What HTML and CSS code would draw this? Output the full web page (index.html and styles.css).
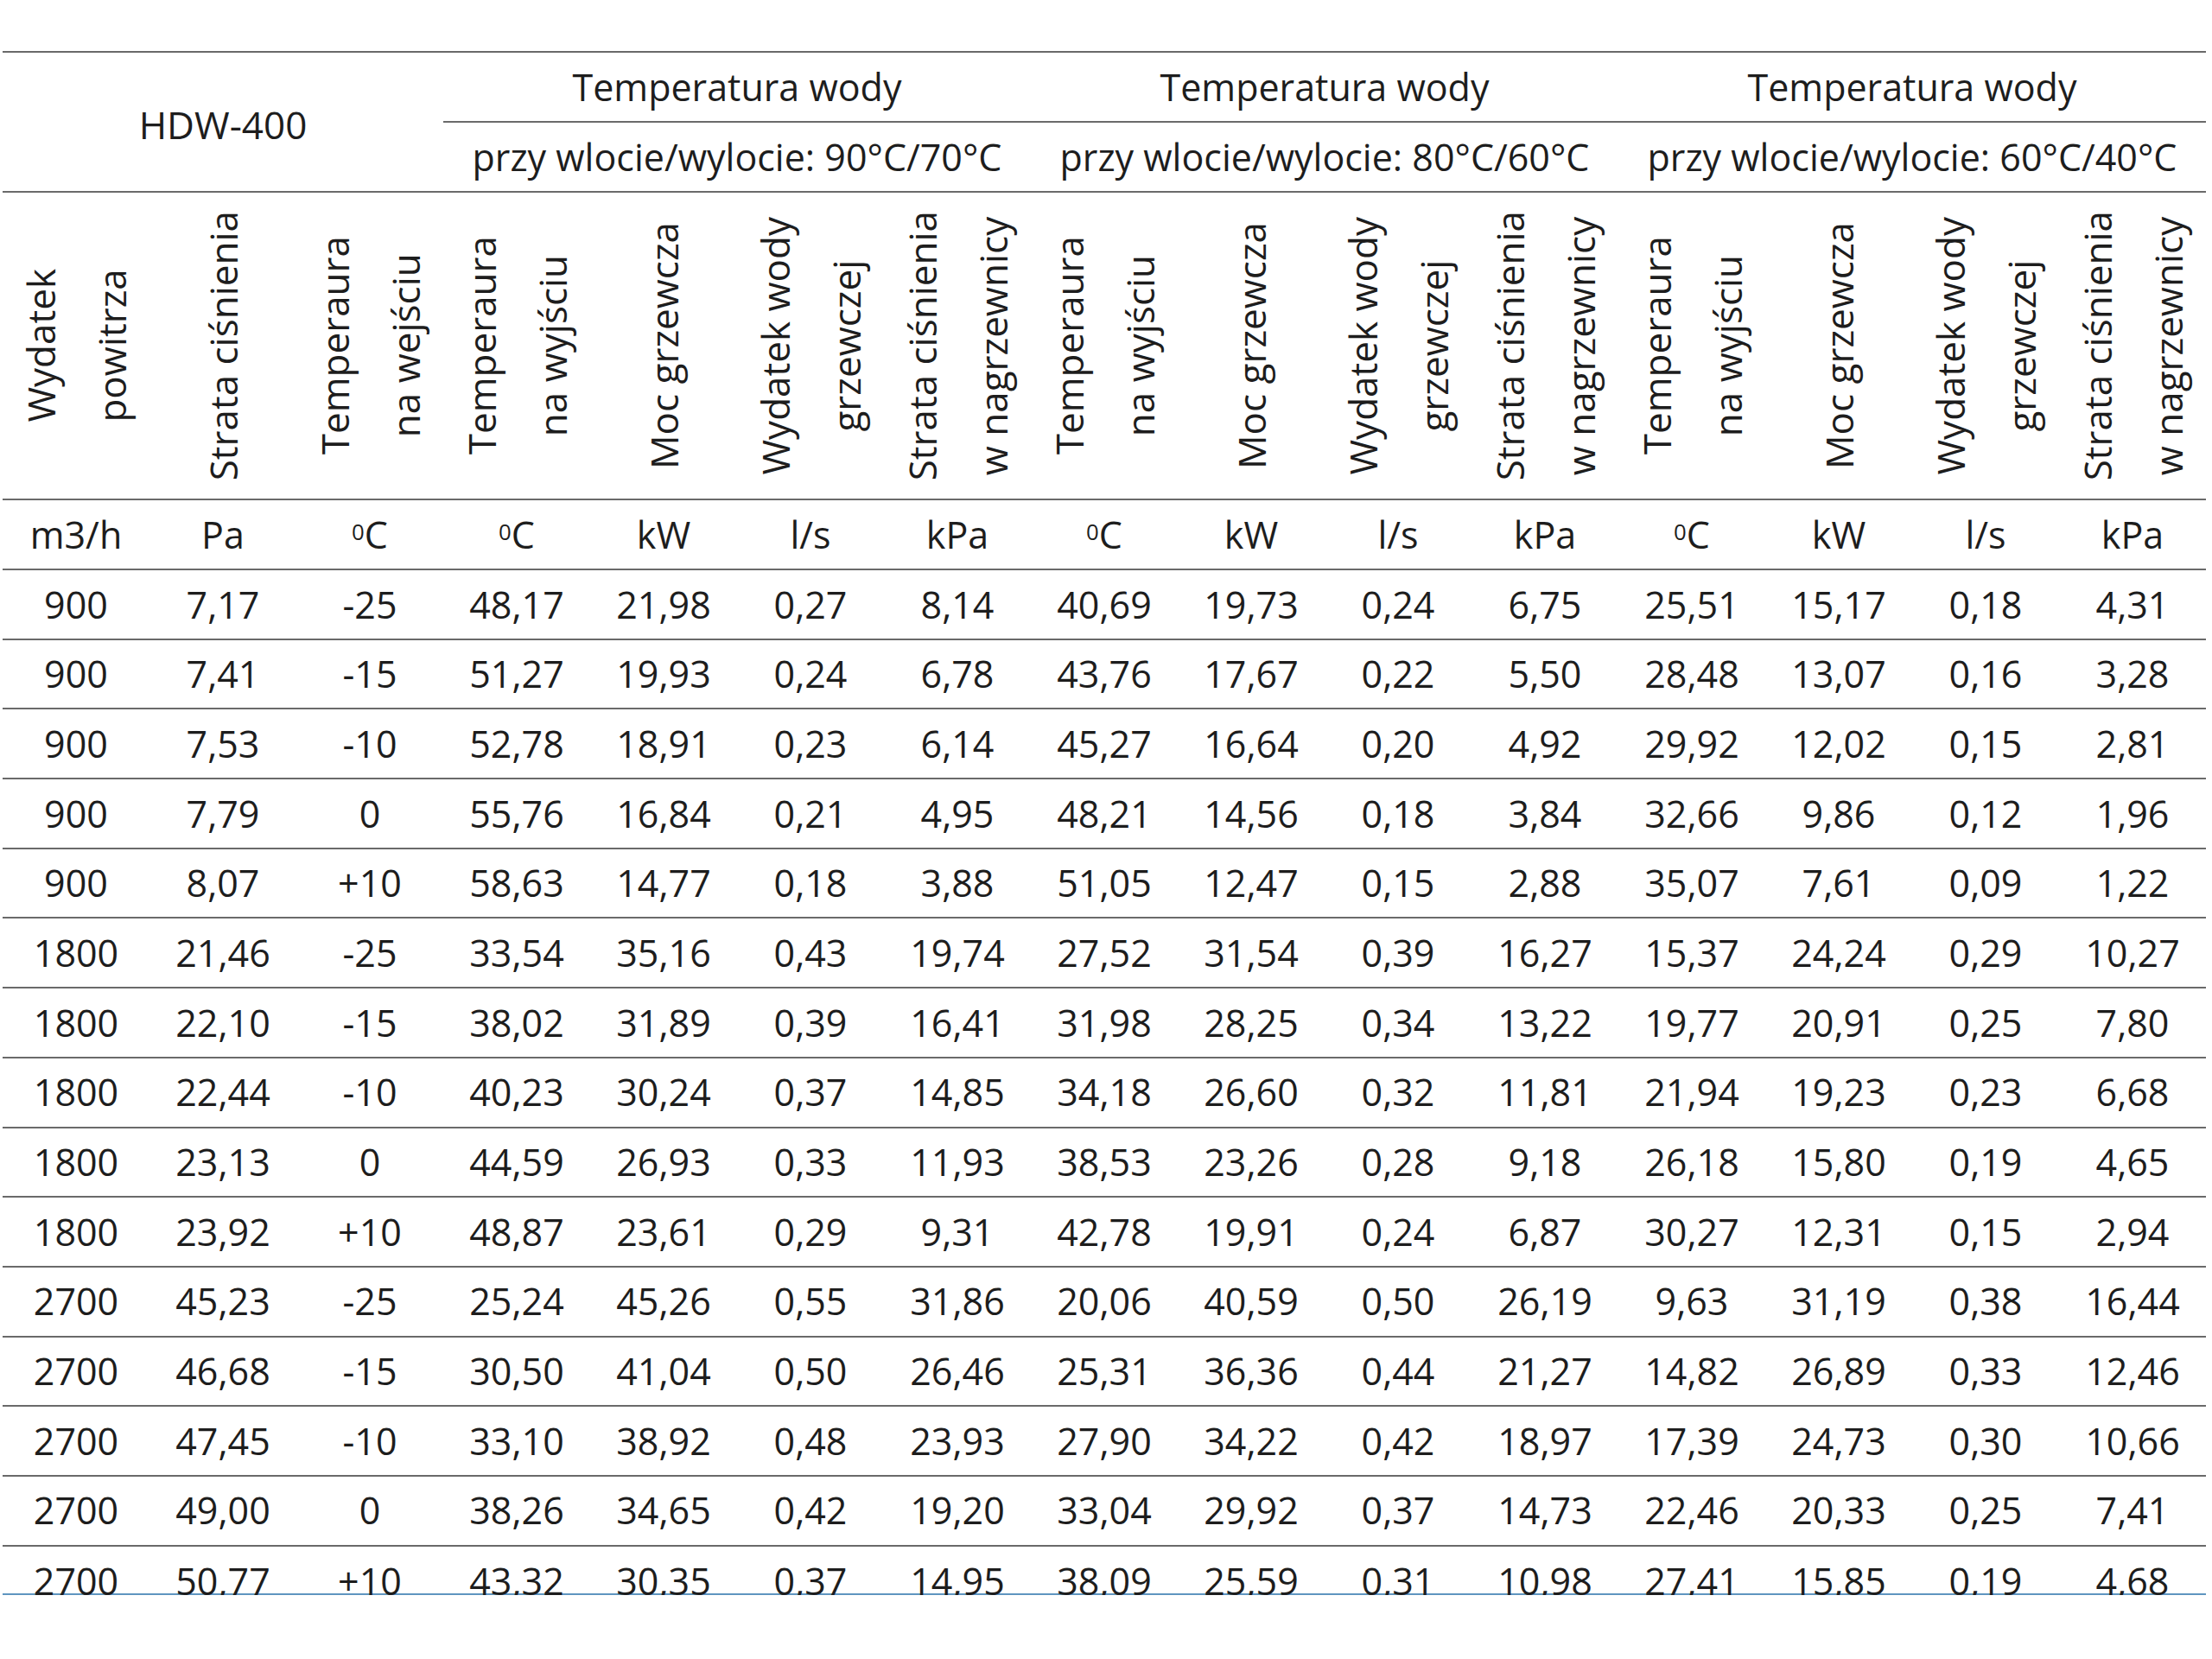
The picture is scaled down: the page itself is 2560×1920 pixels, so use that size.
FILE: index.html
```html
<!DOCTYPE html>
<html lang="pl">
<head>
<meta charset="utf-8">
<title>HDW-400</title>
<link rel="stylesheet" href="styles.css">
</head>
<body>
<div class="sheet">
  <div class="grid">
    <div class="cell model">HDW-400</div>
    <div class="cell grp-a">Temperatura wody</div>
    <div class="cell grp-a">Temperatura wody</div>
    <div class="cell grp-a">Temperatura wody</div>
    <div class="cell grp-b">przy wlocie/wylocie: 90°C/70°C</div>
    <div class="cell grp-b">przy wlocie/wylocie: 80°C/60°C</div>
    <div class="cell grp-b">przy wlocie/wylocie: 60°C/40°C</div>

    <div class="cell vh"><span class="vt">Wydatek<br>powitrza</span></div>
    <div class="cell vh"><span class="vt">Strata ciśnienia</span></div>
    <div class="cell vh"><span class="vt">Temperaura<br>na wejściu</span></div>
    <div class="cell vh"><span class="vt">Temperaura<br>na wyjściu</span></div>
    <div class="cell vh"><span class="vt">Moc grzewcza</span></div>
    <div class="cell vh"><span class="vt">Wydatek wody<br>grzewczej</span></div>
    <div class="cell vh"><span class="vt">Strata ciśnienia<br>w nagrzewnicy</span></div>
    <div class="cell vh"><span class="vt">Temperaura<br>na wyjściu</span></div>
    <div class="cell vh"><span class="vt">Moc grzewcza</span></div>
    <div class="cell vh"><span class="vt">Wydatek wody<br>grzewczej</span></div>
    <div class="cell vh"><span class="vt">Strata ciśnienia<br>w nagrzewnicy</span></div>
    <div class="cell vh"><span class="vt">Temperaura<br>na wyjściu</span></div>
    <div class="cell vh"><span class="vt">Moc grzewcza</span></div>
    <div class="cell vh"><span class="vt">Wydatek wody<br>grzewczej</span></div>
    <div class="cell vh"><span class="vt">Strata ciśnienia<br>w nagrzewnicy</span></div>

    <div class="cell">m3/h</div><div class="cell">Pa</div><div class="cell"><sup class="deg">0</sup>C</div>
    <div class="cell"><sup class="deg">0</sup>C</div><div class="cell">kW</div><div class="cell">l/s</div><div class="cell">kPa</div>
    <div class="cell"><sup class="deg">0</sup>C</div><div class="cell">kW</div><div class="cell">l/s</div><div class="cell">kPa</div>
    <div class="cell"><sup class="deg">0</sup>C</div><div class="cell">kW</div><div class="cell">l/s</div><div class="cell">kPa</div>

    <div class="cell">900</div><div class="cell">7,17</div><div class="cell">-25</div><div class="cell">48,17</div><div class="cell">21,98</div><div class="cell">0,27</div><div class="cell">8,14</div><div class="cell">40,69</div><div class="cell">19,73</div><div class="cell">0,24</div><div class="cell">6,75</div><div class="cell">25,51</div><div class="cell">15,17</div><div class="cell">0,18</div><div class="cell">4,31</div>
    <div class="cell">900</div><div class="cell">7,41</div><div class="cell">-15</div><div class="cell">51,27</div><div class="cell">19,93</div><div class="cell">0,24</div><div class="cell">6,78</div><div class="cell">43,76</div><div class="cell">17,67</div><div class="cell">0,22</div><div class="cell">5,50</div><div class="cell">28,48</div><div class="cell">13,07</div><div class="cell">0,16</div><div class="cell">3,28</div>
    <div class="cell">900</div><div class="cell">7,53</div><div class="cell">-10</div><div class="cell">52,78</div><div class="cell">18,91</div><div class="cell">0,23</div><div class="cell">6,14</div><div class="cell">45,27</div><div class="cell">16,64</div><div class="cell">0,20</div><div class="cell">4,92</div><div class="cell">29,92</div><div class="cell">12,02</div><div class="cell">0,15</div><div class="cell">2,81</div>
    <div class="cell">900</div><div class="cell">7,79</div><div class="cell">0</div><div class="cell">55,76</div><div class="cell">16,84</div><div class="cell">0,21</div><div class="cell">4,95</div><div class="cell">48,21</div><div class="cell">14,56</div><div class="cell">0,18</div><div class="cell">3,84</div><div class="cell">32,66</div><div class="cell">9,86</div><div class="cell">0,12</div><div class="cell">1,96</div>
    <div class="cell">900</div><div class="cell">8,07</div><div class="cell">+10</div><div class="cell">58,63</div><div class="cell">14,77</div><div class="cell">0,18</div><div class="cell">3,88</div><div class="cell">51,05</div><div class="cell">12,47</div><div class="cell">0,15</div><div class="cell">2,88</div><div class="cell">35,07</div><div class="cell">7,61</div><div class="cell">0,09</div><div class="cell">1,22</div>
    <div class="cell">1800</div><div class="cell">21,46</div><div class="cell">-25</div><div class="cell">33,54</div><div class="cell">35,16</div><div class="cell">0,43</div><div class="cell">19,74</div><div class="cell">27,52</div><div class="cell">31,54</div><div class="cell">0,39</div><div class="cell">16,27</div><div class="cell">15,37</div><div class="cell">24,24</div><div class="cell">0,29</div><div class="cell">10,27</div>
    <div class="cell">1800</div><div class="cell">22,10</div><div class="cell">-15</div><div class="cell">38,02</div><div class="cell">31,89</div><div class="cell">0,39</div><div class="cell">16,41</div><div class="cell">31,98</div><div class="cell">28,25</div><div class="cell">0,34</div><div class="cell">13,22</div><div class="cell">19,77</div><div class="cell">20,91</div><div class="cell">0,25</div><div class="cell">7,80</div>
    <div class="cell">1800</div><div class="cell">22,44</div><div class="cell">-10</div><div class="cell">40,23</div><div class="cell">30,24</div><div class="cell">0,37</div><div class="cell">14,85</div><div class="cell">34,18</div><div class="cell">26,60</div><div class="cell">0,32</div><div class="cell">11,81</div><div class="cell">21,94</div><div class="cell">19,23</div><div class="cell">0,23</div><div class="cell">6,68</div>
    <div class="cell">1800</div><div class="cell">23,13</div><div class="cell">0</div><div class="cell">44,59</div><div class="cell">26,93</div><div class="cell">0,33</div><div class="cell">11,93</div><div class="cell">38,53</div><div class="cell">23,26</div><div class="cell">0,28</div><div class="cell">9,18</div><div class="cell">26,18</div><div class="cell">15,80</div><div class="cell">0,19</div><div class="cell">4,65</div>
    <div class="cell">1800</div><div class="cell">23,92</div><div class="cell">+10</div><div class="cell">48,87</div><div class="cell">23,61</div><div class="cell">0,29</div><div class="cell">9,31</div><div class="cell">42,78</div><div class="cell">19,91</div><div class="cell">0,24</div><div class="cell">6,87</div><div class="cell">30,27</div><div class="cell">12,31</div><div class="cell">0,15</div><div class="cell">2,94</div>
    <div class="cell">2700</div><div class="cell">45,23</div><div class="cell">-25</div><div class="cell">25,24</div><div class="cell">45,26</div><div class="cell">0,55</div><div class="cell">31,86</div><div class="cell">20,06</div><div class="cell">40,59</div><div class="cell">0,50</div><div class="cell">26,19</div><div class="cell">9,63</div><div class="cell">31,19</div><div class="cell">0,38</div><div class="cell">16,44</div>
    <div class="cell">2700</div><div class="cell">46,68</div><div class="cell">-15</div><div class="cell">30,50</div><div class="cell">41,04</div><div class="cell">0,50</div><div class="cell">26,46</div><div class="cell">25,31</div><div class="cell">36,36</div><div class="cell">0,44</div><div class="cell">21,27</div><div class="cell">14,82</div><div class="cell">26,89</div><div class="cell">0,33</div><div class="cell">12,46</div>
    <div class="cell">2700</div><div class="cell">47,45</div><div class="cell">-10</div><div class="cell">33,10</div><div class="cell">38,92</div><div class="cell">0,48</div><div class="cell">23,93</div><div class="cell">27,90</div><div class="cell">34,22</div><div class="cell">0,42</div><div class="cell">18,97</div><div class="cell">17,39</div><div class="cell">24,73</div><div class="cell">0,30</div><div class="cell">10,66</div>
    <div class="cell">2700</div><div class="cell">49,00</div><div class="cell">0</div><div class="cell">38,26</div><div class="cell">34,65</div><div class="cell">0,42</div><div class="cell">19,20</div><div class="cell">33,04</div><div class="cell">29,92</div><div class="cell">0,37</div><div class="cell">14,73</div><div class="cell">22,46</div><div class="cell">20,33</div><div class="cell">0,25</div><div class="cell">7,41</div>
    <div class="cell">2700</div><div class="cell">50,77</div><div class="cell">+10</div><div class="cell">43,32</div><div class="cell">30,35</div><div class="cell">0,37</div><div class="cell">14,95</div><div class="cell">38,09</div><div class="cell">25,59</div><div class="cell">0,31</div><div class="cell">10,98</div><div class="cell">27,41</div><div class="cell">15,85</div><div class="cell">0,19</div><div class="cell">4,68</div>
  </div>
</div>
</body>
</html>
```

FILE: styles.css
```css
html, body {
  margin: 0;
  padding: 0;
  background: #ffffff;
}

body {
  font-family: "Open Sans", "DejaVu Sans", sans-serif;
  color: #1d1d1d;
}

.sheet {
  box-sizing: content-box;
  margin: 59px 0 0 3px;
  width: 2550px;
  height: 1785px;
  border-bottom: 2px solid #5f95c0;
}

.grid {
  display: grid;
  grid-template-columns: repeat(15, 170px);
  grid-template-rows: 81px 81px 356px 81px repeat(14, 80.7px) 58px;
}

.cell {
  box-sizing: border-box;
  border-top: 2px solid #6a6a6a;
  display: flex;
  align-items: center;
  justify-content: center;
  font-size: 43px;
  line-height: 1.2;
  white-space: nowrap;
}

.grid > .cell:nth-last-child(-n+15) {
  align-items: flex-start;
  padding-top: 14px;
}

.model {
  grid-column: 1 / span 3;
  grid-row: 1 / span 2;
  padding-top: 6px;
  font-size: 44px;
}

.grp-a {
  grid-column: span 4;
}

.grp-b {
  grid-column: span 4;
}

.vh {
  padding: 0;
}

.vt {
  writing-mode: vertical-rl;
  transform: rotate(180deg);
  text-align: center;
  font-size: 44px;
  line-height: 82px;
}

.deg {
  font-size: 0.6em;
  line-height: 0;
  position: relative;
  top: -0.15em;
  vertical-align: super;
}
```
